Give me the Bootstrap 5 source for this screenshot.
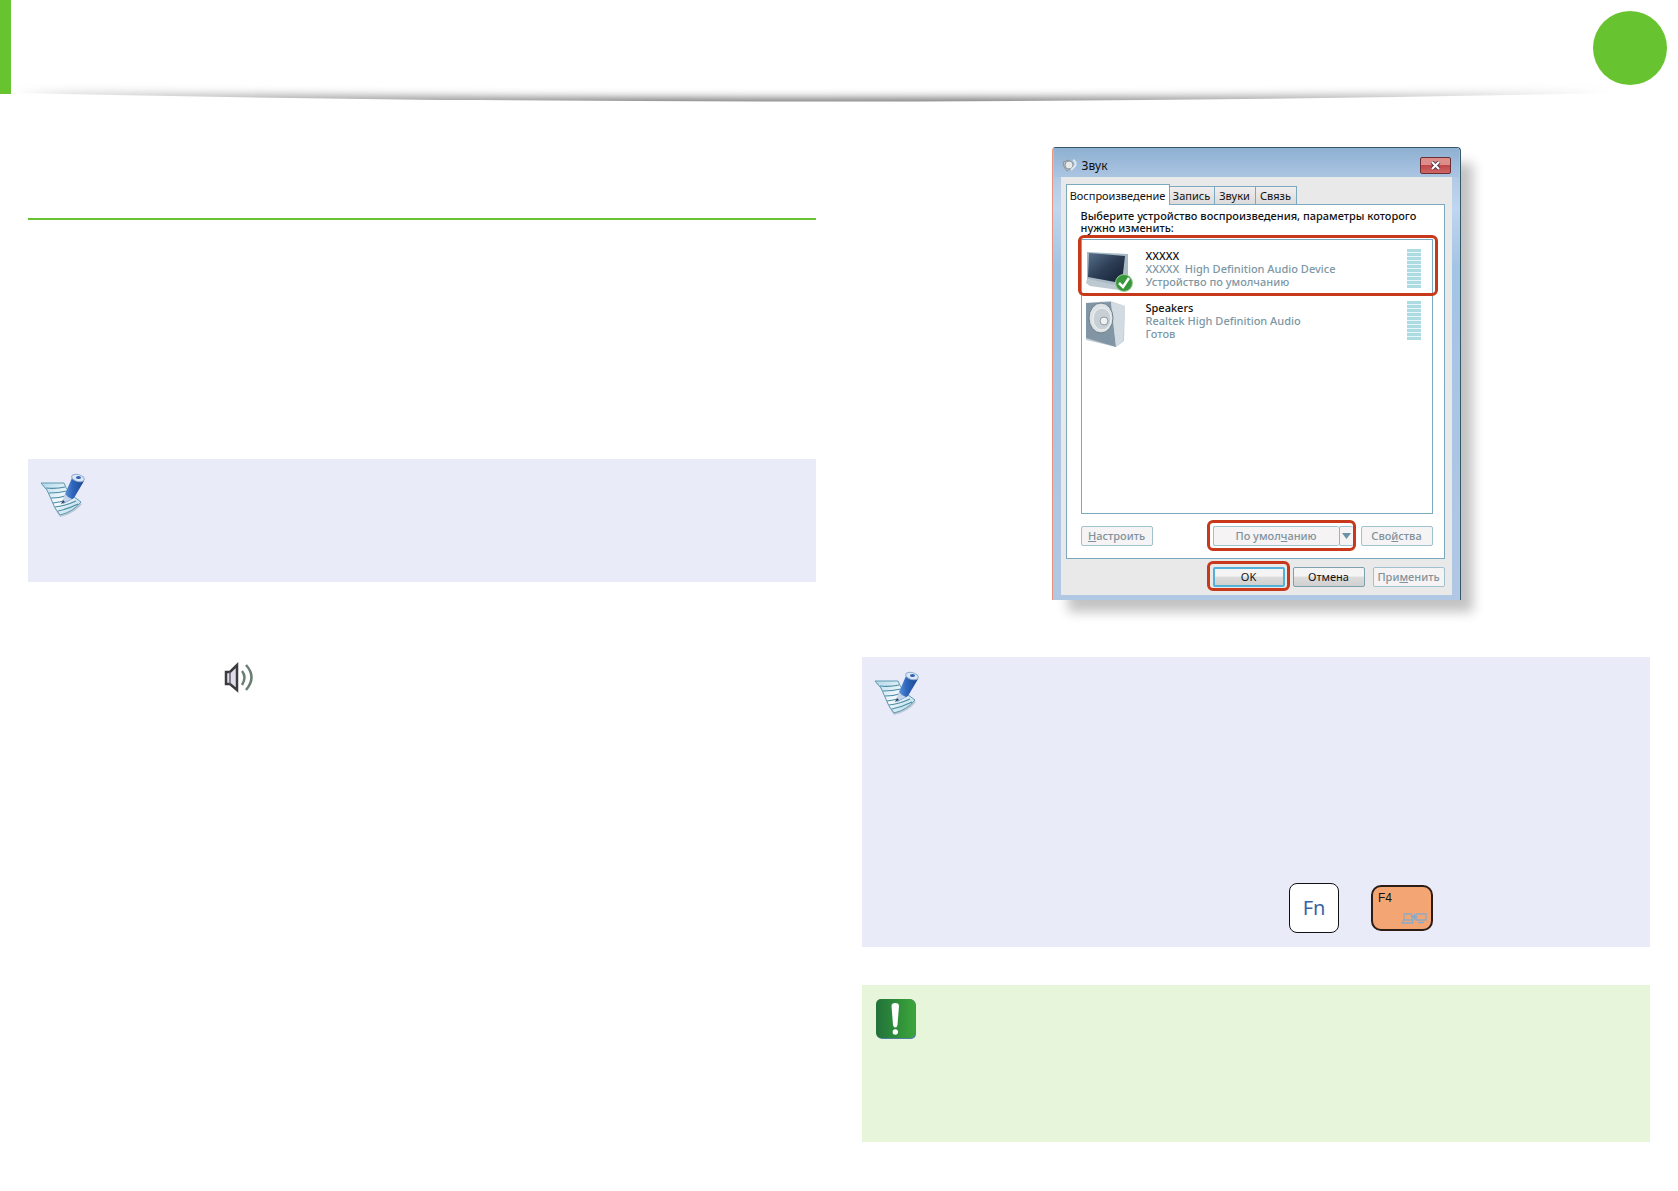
<!DOCTYPE html>
<html lang="ru">
<head>
<meta charset="utf-8">
<meta name="viewport" content="width=device-width, initial-scale=1">
<title>Звук</title>
<link href="https://cdn.jsdelivr.net/npm/bootstrap@5.3.0/dist/css/bootstrap.min.css" rel="stylesheet">
<style>
:root{--leaf:#67c430;--mark:#c8381a;--edge:#7aa9c0}
body{font-family:"Noto Sans","Open Sans",sans-serif;background:#fff;color:#111}
.page-head{height:94px}
.head-bar{width:11px;background:var(--leaf)}
.page-dot{width:74px;height:74px;margin:11px 11px 0 0;background:var(--leaf)}
.head-shade{left:11px;top:76px;width:calc(100% - 76px);height:30px}
.columns{gap:46px;padding:0 28px 49px}
.section-head{height:126px;border-bottom:2px solid var(--leaf)}
.body-gap{height:239px}
.note{background:#e9ebf8;padding:14px 12px 13px}
.note-short{min-height:123px}
.note-tall{min-height:290px;margin-top:57px}
.note-warn{background:#e7f5db;min-height:157px;margin-top:38px;padding:14px}
.sound-line{padding:80px 0 0 196px}
.key-row{gap:32px;padding:0 205px 1px 0}
.key-fn{width:50px;height:50px;border:1px solid #111;border-radius:8px;background:#fff;color:#3a63a5;font-size:20px;font-family:"Noto Sans",sans-serif}
.key-f4{width:62px;height:46px;border:2px solid #2b1d16;border-radius:10px;background:#f4a574;font:12px/14px "Liberation Sans",sans-serif;padding:4px 5px}
.key-f4 svg{right:4px;bottom:5px}
/* dialog window */
.dlg{width:409px;height:453px;margin:53px auto 0;padding:0 8px 5px;background:linear-gradient(#a4bedb,#bfd6ee 60px,#a3c4e4 120px,#b1c8e4);border:1px solid #35596b;border-left-color:#e9957f;border-bottom:0;border-radius:4px 4px 0 0;box-shadow:14px 14px 12px -2px rgba(0,0,0,.24);font-size:11px;line-height:13px}
.dlg-title{height:29px;padding-top:9px;gap:3px;background:linear-gradient(#8fb0d2,#aac5e2);margin:0 -7px;padding-left:7px;padding-right:8px;font-size:12px;line-height:18px}
.dlg-close{width:31px;height:17px;border:1px solid #6b2e35;border-radius:2px;background:linear-gradient(#dd8d8a 45%,#c1474a 50%,#cf6665);padding:0}
.dlg-client{background:#e9e9ea;padding:7px 7px 0 5px;height:418px}
.tabs button{height:18px;border:1px solid var(--edge);border-left-width:0;border-bottom:0;background:linear-gradient(#f0eeee,#dcdadb);padding:0;width:41px;color:#111}
.tabs button.wide{width:45px}
.tabs button.active{width:104px;height:21px;background:#fff;border-left-width:1px;margin-bottom:-1px;position:relative}
.pane{height:355px;background:#fff;border:1px solid var(--edge);padding:5px 11px 0 14px}
.pane-lead{line-height:12px;font-weight:500;margin-bottom:5px}
.devices{height:275px;border:1px solid var(--edge);margin:0;padding:0;list-style:none}
.dev{height:52px;padding:9px 11px 0 4px}
.dev-art{width:60px}
.dev-name{font-weight:500;color:#111}
.dev-sub{color:#7d97a4;font-weight:500}
.meter{width:14px;height:39px;background:repeating-linear-gradient(#addbe2 0 3px,#e9f6f8 3px 4px)}
.marked{position:relative}
.marked::after{content:"";position:absolute;inset:-6px -5px -4px -6px;border:3px solid var(--mark);border-radius:6px;pointer-events:none}
.dev.marked::after{inset:-5px -6px -4px -4px}
.split.marked::after{inset:-6px -3px -5px -6px}
.tool{width:72px;height:20px;border:1px solid #9fc2cf;border-radius:2px;background:#f5f3f3;color:#7f929d;font-weight:500;padding:0;line-height:16px}
.pane-tools{padding-top:12px}
.split{width:140px}
.split .tool{width:126px;border-right:0}
.split .tool+.tool{width:14px;border-left:1px solid #9fb3bc}
.tool.live{border-color:#7d9fae;background:linear-gradient(#f4f4f4 45%,#dcdcdc 50%,#d0d0d0);color:#111;font-weight:400}
.tool.ok{border:2px solid #53b0d8}
.dlg-foot{gap:8px;padding:8px 0 0}
</style>
</head>
<body>
<svg width="0" height="0" class="position-absolute" aria-hidden="true">
 <defs>
  <linearGradient id="pen" x1="0" x2="1"><stop offset="0" stop-color="#6a9be0"/><stop offset=".45" stop-color="#2f67bd"/><stop offset="1" stop-color="#1c4593"/></linearGradient>
  <linearGradient id="sheet" x1="0" y1="0" x2="1" y2="1"><stop offset="0" stop-color="#b0d6ea"/><stop offset=".5" stop-color="#f4fafd"/><stop offset="1" stop-color="#a9d2e4"/></linearGradient>
  <symbol id="memo" viewBox="0 0 46 44">
   <path d="M1 12 Q9 17 12 28 Q15 38 20 44 Q34 41 42 31Z" fill="#8fa5b8" opacity=".5"/>
   <path d="M1 10 H24 Q27 20 41 29 Q33 39 20 42 Q14 35 11 26 Q8 16 1 10Z" fill="url(#sheet)" stroke="#5f9aaf" stroke-width="1"/>
   <path d="M6 15 Q16 16 25 14 M9 20 Q18 20 27 18 M11 25 Q20 25 29 22 M13 30 Q22 29 33 25 M15 34 Q25 33 36 28 M18 38 Q28 36 38 31" fill="none" stroke="#4d8ba3" stroke-width="1.100"/>
   <path d="M32 5 Q38 9 44 8 L34 25 L23 31 L25 21Z" fill="url(#pen)"/>
   <path d="M25 21 L21 31 L32 26 Q28 25 25 21Z" fill="#c6d5e8"/><path d="M23 27 L21 31 L25 29Z" fill="#28415c"/>
   <ellipse cx="38" cy="5" rx="6.500" ry="3.500" transform="rotate(15 38 5)" fill="#dbe7f5" stroke="#8fabd0"/><ellipse cx="38.500" cy="4.500" rx="2.500" ry="1.500" fill="#2e62b3"/>
  </symbol>
 </defs>
</svg>

<header class="page-head d-flex justify-content-between align-items-stretch position-relative">
 <div class="head-bar"></div>
 <div class="page-dot rounded-circle"></div>
 <svg class="head-shade position-absolute" viewBox="0 0 1600 30" preserveAspectRatio="none" aria-hidden="true">
  <defs>
   <filter id="soft" x="0" y="-100%" width="100%" height="300%"><feGaussianBlur stdDeviation="0 5"/></filter>
   <linearGradient id="fade"><stop offset="0" stop-color="#000" stop-opacity="0"/><stop offset=".04" stop-color="#000" stop-opacity=".15"/><stop offset=".16" stop-color="#000" stop-opacity=".34"/><stop offset=".4" stop-color="#000" stop-opacity=".58"/><stop offset=".6" stop-color="#000" stop-opacity=".58"/><stop offset=".84" stop-color="#000" stop-opacity=".3"/><stop offset="1" stop-color="#000" stop-opacity="0"/></linearGradient>
   <clipPath id="above"><path d="M0 0H1600V17Q800 34 0 17Z"/></clipPath>
  </defs>
  <g clip-path="url(#above)"><path d="M0 15Q800 30 1600 15V25Q800 44 0 25Z" fill="url(#fade)" filter="url(#soft)"/></g>
 </svg>
</header>

<main class="columns d-flex">
 <section class="flex-fill w-50">
  <div class="section-head"></div>
  <div class="body-gap"></div>
  <div class="note note-short"><svg width="46" height="44" role="img" aria-label="memo"><use href="#memo"/></svg></div>
  <div class="sound-line">
   <svg width="32" height="32" viewBox="0 0 32 32" role="img" aria-label="volume">
    <path d="M2 10H6L13 3V28L6 22H2Z" fill="#e5dce9" stroke="#3a3c40" stroke-width="2.500"/>
    <path d="M6 10V22" stroke="#59636c" stroke-width="1.500"/>
    <path d="M18 9Q23 15 18 23 M22 3Q33 15 22 28" fill="none" stroke="#6a7f74" stroke-width="2.500"/>
   </svg>
  </div>
 </section>

 <section class="flex-fill w-50">
  <div class="dlg" role="dialog" aria-label="Звук">
   <div class="dlg-title d-flex">
    <svg width="18" height="18" viewBox="0 0 18 18" aria-hidden="true"><path d="M2 5L8 3L11 11L6 14Q2 10 2 5Z" fill="#b9c0c4" stroke="#8a969e"/><circle cx="8" cy="8" r="4" fill="#e7eaeb" stroke="#8e979c"/><path d="M12 3Q16 5 14 9L10 13" fill="none" stroke="#dfe8f0" stroke-width="2"/></svg>
    <span class="flex-grow-1">Звук</span>
    <button class="dlg-close d-flex align-items-center justify-content-center" aria-label="Закрыть"><svg width="11" height="9" viewBox="0 0 11 9"><path d="M2 1L9 8M9 1L2 8" stroke="#5b3a47" stroke-width="4"/><path d="M2 1L9 8M9 1L2 8" stroke="#fff" stroke-width="2"/></svg></button>
   </div>
   <div class="dlg-client">
    <div class="tabs d-flex align-items-end" role="tablist">
     <button class="active" role="tab" aria-selected="true">Воспроизведение</button><button class="wide" role="tab">Запись</button><button role="tab">Звуки</button><button role="tab">Связь</button>
    </div>
    <div class="pane">
     <p class="pane-lead">Выберите устройство воспроизведения, параметры которого<br>нужно изменить:</p>
     <ul class="devices">
      <li class="dev marked d-flex">
       <div class="dev-art"><svg width="50" height="46" viewBox="0 0 50 46" aria-hidden="true">
        <defs><linearGradient id="scr" x1="0" y1="0" x2="1" y2="1"><stop offset="0" stop-color="#56708b"/><stop offset=".5" stop-color="#2c3d54"/><stop offset="1" stop-color="#141f33"/></linearGradient></defs>
        <path d="M1 30L34 35L33 41L4 37L0 34Z" fill="#bdc9d0"/>
        <path d="M1 3L42 5V31L30 36L1 30Z" fill="#a9bac6"/><path d="M3 4L39 7L36 33L29 33L2 28Z" fill="url(#scr)"/>
        <circle cx="38" cy="34" r="8.500" fill="#38963b" stroke="#a0cf9d"/><path d="M33 34L37 38L43 29" fill="none" stroke="#fff" stroke-width="2.500"/></svg></div>
       <div class="flex-grow-1"><div class="dev-name">XXXXX</div><div class="dev-sub">XXXXX&nbsp; High Definition Audio Device</div><div class="dev-sub">Устройство по умолчанию</div></div>
       <div class="meter"></div>
      </li>
      <li class="dev d-flex">
       <div class="dev-art"><svg width="44" height="48" viewBox="0 0 44 48" aria-hidden="true">
        <path d="M0 2L24 0L39 5L38 40L30 46L0 39Z" fill="#c3cdd5"/><path d="M0 2L25 1L30 46L0 37Z" fill="#8195a5"/><path d="M25 1L39 5L37 40L30 46Z" fill="#d3dbe2"/>
        <ellipse cx="15" cy="17" rx="12" ry="15" fill="#dde2e5" stroke="#6d7e8b"/><ellipse cx="16" cy="18" rx="9" ry="11" fill="#c9d0d5" stroke="#eef2f4"/><circle cx="18" cy="20" r="4" fill="#eff1f2" stroke="#8c9ba5"/></svg></div>
       <div class="flex-grow-1"><div class="dev-name">Speakers</div><div class="dev-sub">Realtek High Definition Audio</div><div class="dev-sub">Готов</div></div>
       <div class="meter"></div>
      </li>
     </ul>
     <div class="pane-tools d-flex">
      <button class="tool me-auto"><u>Н</u>астроить</button>
      <div class="split marked d-flex me-2"><button class="tool">По умол<u>ч</u>анию</button><button class="tool d-flex align-items-center justify-content-center" aria-label="Ещё"><svg width="9" height="6" viewBox="0 0 9 6"><path d="M0 0H9L4.500 6Z" fill="#6b93a6"/></svg></button></div>
      <button class="tool">Сво<u>й</u>ства</button>
     </div>
    </div>
    <div class="dlg-foot d-flex justify-content-end">
     <div class="marked"><button class="tool live ok">OK</button></div>
     <button class="tool live">Отмена</button>
     <button class="tool">При<u>м</u>енить</button>
    </div>
   </div>
  </div>

  <div class="note note-tall d-flex flex-column justify-content-between">
   <svg width="46" height="44" role="img" aria-label="memo"><use href="#memo"/></svg>
   <div class="key-row d-flex justify-content-end align-items-center">
    <kbd class="key-fn d-flex align-items-center justify-content-center p-0">Fn</kbd>
    <div class="key-f4 position-relative">F4<svg class="position-absolute" width="26" height="12" viewBox="0 0 26 12" fill="none" stroke="#8aabc8" stroke-width="1.300" aria-hidden="true"><path d="M3 8V2H11M3 8H12V6M3 8L1 11H12L11 8M15 2H25V8H15V6M17 10.500H23"/><path d="M10 3H13V1L17 5L13 8V6H10Z" fill="#8aabc8" stroke="none"/></svg></div>
   </div>
  </div>

  <div class="note note-warn">
   <svg width="40" height="40" viewBox="0 0 40 40" role="img" aria-label="warning">
    <defs><linearGradient id="warn"><stop offset="0" stop-color="#217239"/><stop offset="1" stop-color="#3ca53b"/></linearGradient></defs>
    <rect x="1" y="1" width="39" height="39" rx="5" fill="#5080a0"/><rect width="39" height="39" rx="5" fill="url(#warn)"/>
    <path d="M15.500 7Q15.500 4 19.300 4Q23 4 23 7L21.500 26Q21 28.500 19.300 28.500Q17.500 28.500 17 26Z" fill="#fff"/><circle cx="19.300" cy="33" r="2.700" fill="#fff"/>
   </svg>
  </div>
 </section>
</main>
<script src="https://cdn.jsdelivr.net/npm/bootstrap@5.3.0/dist/js/bootstrap.bundle.min.js"></script>
</body>
</html>
